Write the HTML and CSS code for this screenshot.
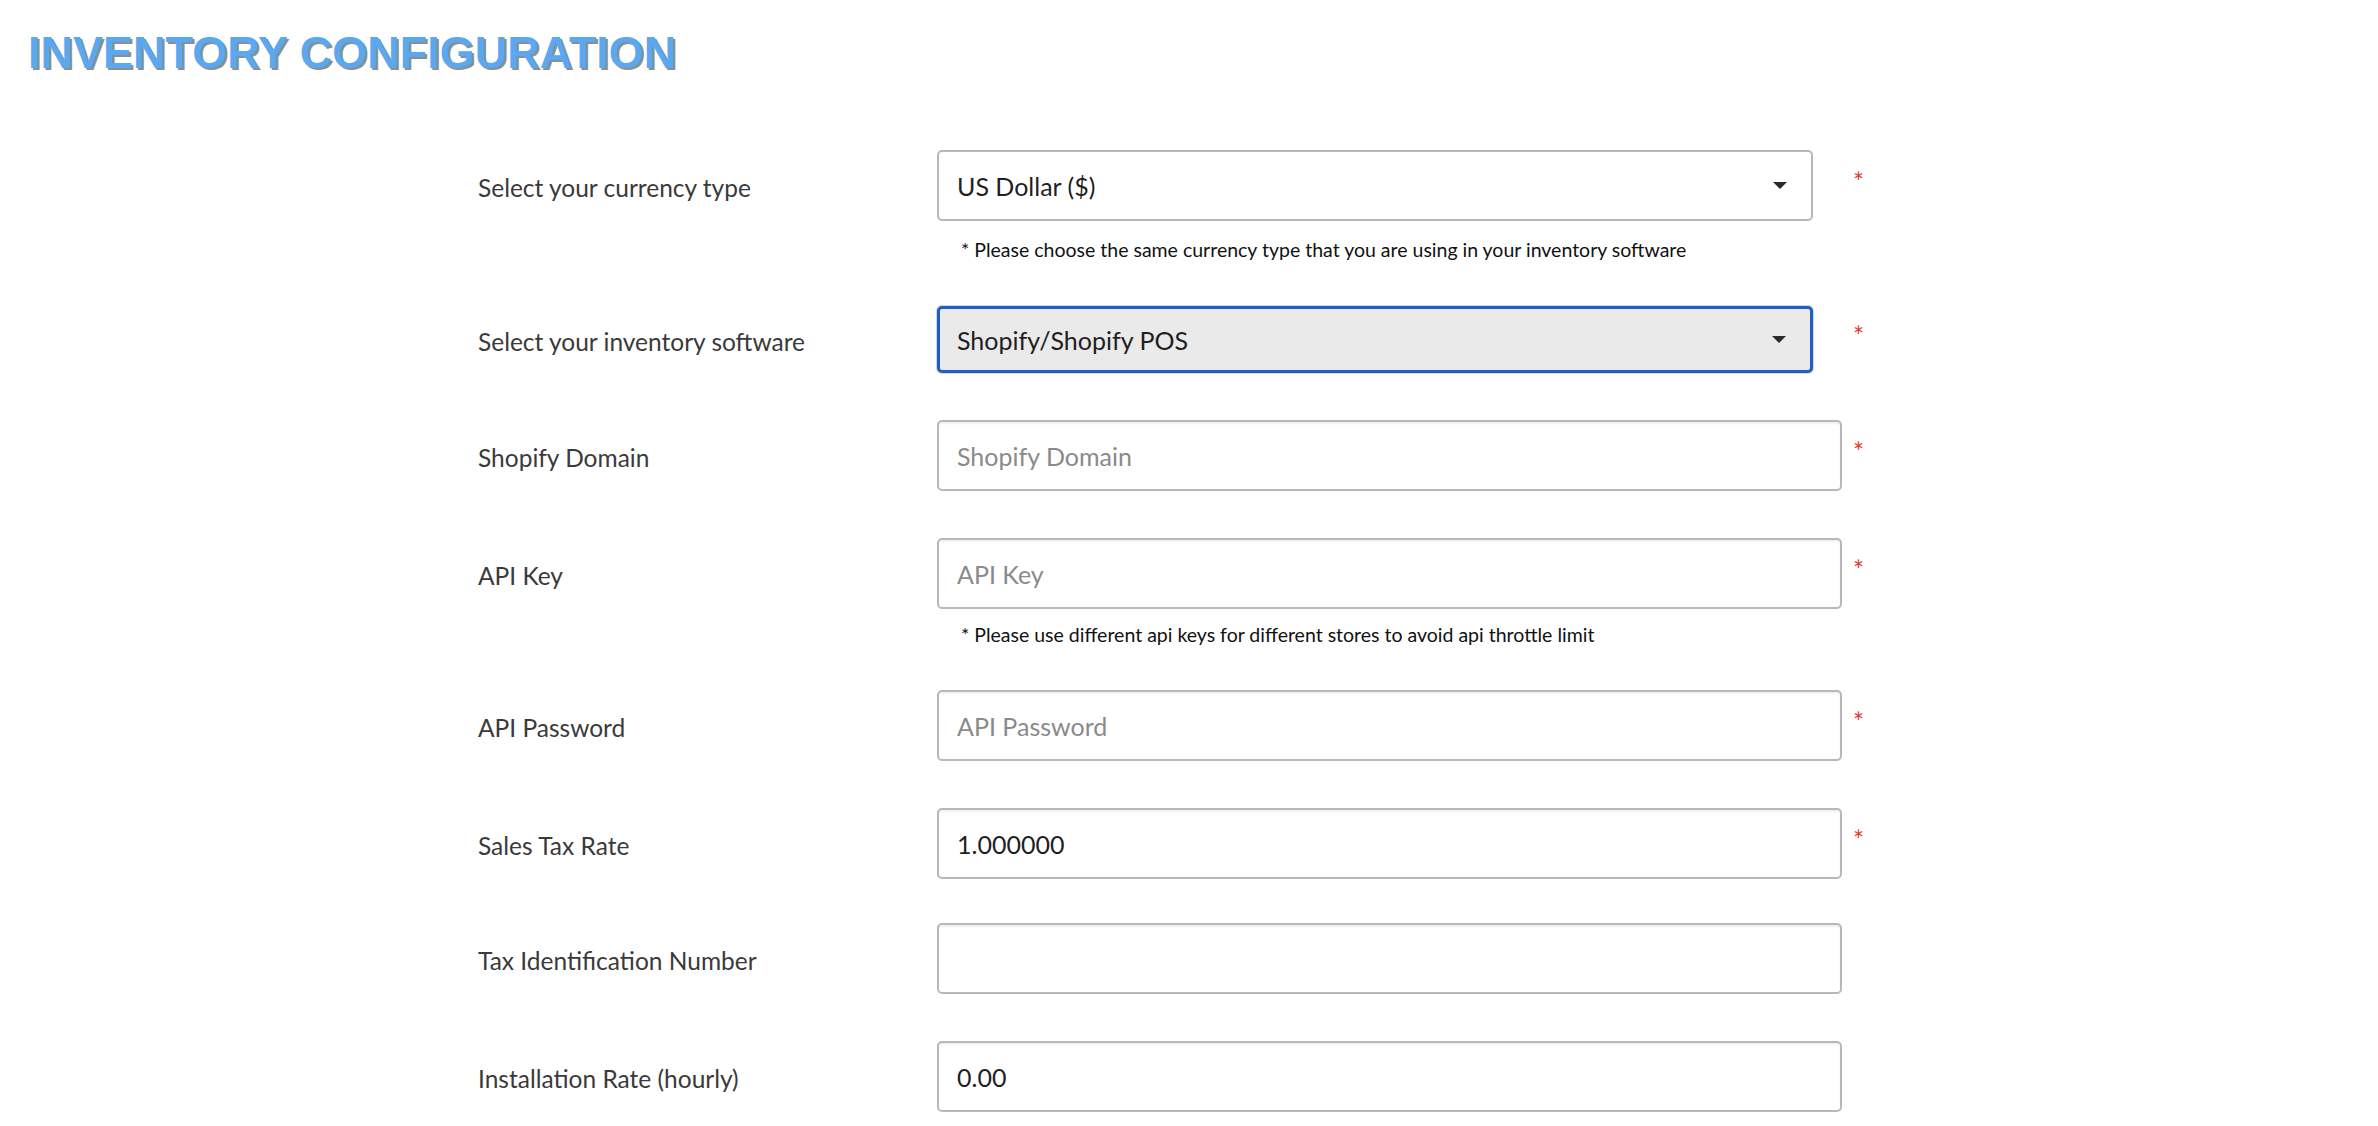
FILE: index.html
```html
<!DOCTYPE html>
<html lang="en">
<head>
<meta charset="utf-8">
<title>Inventory Configuration</title>
<link rel="stylesheet" href="styles.css">
</head>
<body>
<h1 class="page-title">INVENTORY CONFIGURATION</h1>
<form class="config-form">
  <div class="row">
    <label class="row-label">Select your currency type</label>
    <div class="field select-field"><span class="value">US Dollar ($)</span><span class="caret"></span></div>
    <span class="req">*</span>
    <p class="hint hint-currency">* Please choose the same currency type that you are using in your inventory software</p>
  </div>
  <div class="row">
    <label class="row-label">Select your inventory software</label>
    <div class="field select-field focused"><span class="value">Shopify/Shopify POS</span><span class="caret"></span></div>
    <span class="req">*</span>
  </div>
  <div class="row">
    <label class="row-label">Shopify Domain</label>
    <div class="field"><span class="placeholder">Shopify Domain</span></div>
    <span class="req">*</span>
  </div>
  <div class="row">
    <label class="row-label">API Key</label>
    <div class="field"><span class="placeholder">API Key</span></div>
    <span class="req">*</span>
    <p class="hint hint-api">* Please use different api keys for different stores to avoid api throttle limit</p>
  </div>
  <div class="row">
    <label class="row-label">API Password</label>
    <div class="field"><span class="placeholder">API Password</span></div>
    <span class="req">*</span>
  </div>
  <div class="row">
    <label class="row-label">Sales Tax Rate</label>
    <div class="field"><span class="value">1.000000</span></div>
    <span class="req">*</span>
  </div>
  <div class="row row-tight">
    <label class="row-label">Tax Identification Number</label>
    <div class="field"></div>
  </div>
  <div class="row">
    <label class="row-label">Installation Rate (hourly)</label>
    <div class="field"><span class="value">0.00</span></div>
  </div>
</form>
</body>
</html>
```

FILE: styles.css
```css
html, body {
  margin: 0;
  padding: 0;
  background: #ffffff;
}
body {
  font-family: Lato, "Noto Sans", sans-serif;
  color: #333333;
}
.page-title {
  margin: 0;
  padding: 27px 0 0 28px;
  font-family: "Liberation Sans", Arial, sans-serif;
  font-weight: bold;
  font-size: 45px;
  line-height: 52px;
  color: #5aa8f0;
  text-shadow: 2px 2px 0 #8e8e8e;
}
.config-form {
  margin: 71px 0 0 478px;
  display: flex;
  flex-direction: column;
  gap: 47px;
}
.row {
  display: grid;
  grid-template-columns: 459px 905px 40px;
  align-items: center;
}
.row-tight {
  margin-top: -3px;
}
.row-label {
  grid-column: 1;
  grid-row: 1;
  font-size: 24.5px;
  color: #3a3a3a;
  padding-top: 3px;
}
.field {
  grid-column: 2;
  grid-row: 1;
  box-sizing: border-box;
  height: 71px;
  border: 2px solid #b8b8b8;
  border-radius: 5px;
  box-shadow: inset 0 2px 2px rgba(0,0,0,0.06);
  display: flex;
  align-items: center;
  padding: 0 18px;
  font-size: 25px;
  background: #fff;
}
.select-field {
  width: 876px;
  justify-content: space-between;
  padding-right: 24px;
  box-shadow: none;
}
.select-field.focused {
  height: 67px;
  background: #eaeaea;
  border: 3px solid #1f5ec9;
  box-shadow: 0 0 0 1px #d6d6d6;
  padding-left: 17px;
}
.value {
  color: #1f1f1f;
}
.placeholder {
  color: #8a8a8a;
}
.caret {
  width: 0;
  height: 0;
  border-left: 7px solid transparent;
  border-right: 7px solid transparent;
  border-top: 7px solid #2a2a2a;
}
.req {
  grid-column: 3;
  grid-row: 1;
  color: #e53935;
  font-size: 26px;
  padding-left: 11px;
  align-self: center;
  margin-top: -8px;
}
.hint {
  grid-column: 2;
  grid-row: 2;
  padding-left: 24px;
  font-size: 19.5px;
  line-height: 22px;
  color: #111;
}
.hint-currency {
  margin: 18px 0 -2px 0;
}
.hint-api {
  margin: 15px 0 -3px 0;
}
```
